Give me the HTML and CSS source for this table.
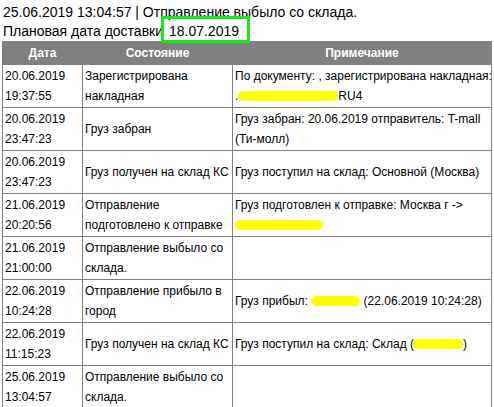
FILE: index.html
```html
<!DOCTYPE html>
<html lang="ru">
<head>
<meta charset="utf-8">
<title>Отслеживание</title>
<link rel="stylesheet" href="styles.css">
</head>
<body>
<div class="summary">
  <div class="line">25.06.2019 13:04:57 | Отправление выбыло со склада.</div>
  <div class="line">Плановая дата доставки <span class="hl">18.07.2019</span></div>
</div>
<table class="track">
  <colgroup>
    <col class="c-date">
    <col class="c-state">
    <col class="c-note">
  </colgroup>
  <thead>
    <tr><th>Дата</th><th>Состояние</th><th>Примечание</th></tr>
  </thead>
  <tbody>
    <tr>
      <td>20.06.2019<br>19:37:55</td>
      <td>Зарегистрирована накладная</td>
      <td><span class="nowrap">По документу: , зарегистрирована накладная:</span><br>.<span class="mask m1"></span>RU4</td>
    </tr>
    <tr>
      <td>20.06.2019<br>23:47:23</td>
      <td>Груз забран</td>
      <td>Груз забран: 20.06.2019 отправитель: T-mall (Ти-молл)</td>
    </tr>
    <tr>
      <td>20.06.2019<br>23:47:23</td>
      <td>Груз получен на склад КС</td>
      <td>Груз поступил на склад: Основной (Москва)</td>
    </tr>
    <tr>
      <td>21.06.2019<br>20:20:56</td>
      <td>Отправление подготовлено к отправке</td>
      <td>Груз подготовлен к отправке: Москва г -&gt; <span class="mask m2"></span></td>
    </tr>
    <tr>
      <td>21.06.2019<br>21:00:00</td>
      <td>Отправление выбыло со склада.</td>
      <td></td>
    </tr>
    <tr>
      <td>22.06.2019<br>10:24:28</td>
      <td>Отправление прибыло в город</td>
      <td>Груз прибыл: <span class="mask m3"></span> (22.06.2019 10:24:28)</td>
    </tr>
    <tr>
      <td>22.06.2019<br>11:15:23</td>
      <td>Груз получен на склад КС</td>
      <td>Груз поступил на склад: Склад (<span class="mask m4"></span>)</td>
    </tr>
    <tr>
      <td>25.06.2019<br>13:04:57</td>
      <td>Отправление выбыло со склада.</td>
      <td></td>
    </tr>
  </tbody>
</table>
</body>
</html>
```
FILE: styles.css
```css
html, body {
  margin: 0;
  padding: 0;
  background: #ffffff;
}
body {
  font-family: "Liberation Sans", Arial, sans-serif;
  color: #000;
}
.summary {
  padding: 3px 0 0 3px;
  font-size: 14px;
  line-height: 19px;
}
.hl {
  position: relative;
  margin-left: 2px;
}
.hl::after {
  content: "";
  position: absolute;
  left: -8px;
  right: -11px;
  top: -7px;
  bottom: -4px;
  border: 3px solid #11ee11;
  z-index: 2;
}
.track {
  margin-left: 2px;
  width: 489px;
  border-collapse: collapse;
  table-layout: fixed;
  font-size: 12px;
  line-height: 20px;
}
.c-date { width: 80px; }
.c-state { width: 150px; }
.c-note { width: 259px; }
.track th {
  background: #808080;
  color: #fff;
  font-weight: bold;
  text-align: center;
  height: 22px;
  padding: 0;
  border: 1px solid #808080;
}
.track td {
  border: 1px solid #808080;
  padding: 1px 2px;
  vertical-align: middle;
  text-align: left;
}
.nowrap {
  white-space: nowrap;
}
.mask {
  display: inline-block;
  height: 10px;
  background: #ffff00;
  border-radius: 5px;
  vertical-align: -1px;
}
.m1 { width: 100px; }
.m2 { width: 88px; }
.m3 { width: 49px; }
.m4 { width: 50px; margin-left: -1px; }
```
